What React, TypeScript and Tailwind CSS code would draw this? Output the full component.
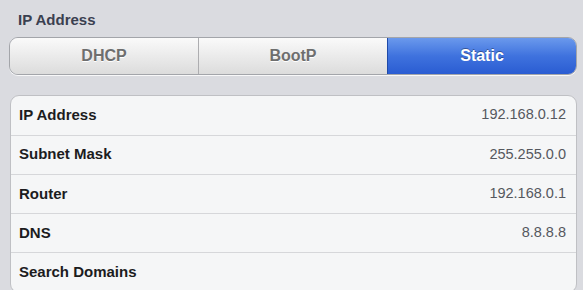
const modes = ["DHCP", "BootP", "Static"]

const rows = [
  { label: "IP Address", value: "192.168.0.12" },
  { label: "Subnet Mask", value: "255.255.0.0" },
  { label: "Router", value: "192.168.0.1" },
  { label: "DNS", value: "8.8.8.8" },
  { label: "Search Domains", value: "" }
]

export default function App() {
  const selected = "Static"

  return (
    <div
      className="w-[583px] h-[290px] overflow-hidden bg-[#dadbe0] pt-[11px] pl-[9px] pr-[6px]"
      style={{ fontFamily: '"Liberation Sans", Arial, sans-serif' }}
    >
      {/* Section title */}
      <h3 className="pl-[9px] text-[15px] leading-[17px] font-bold text-[#3a4050]">IP Address</h3>

      {/* Segmented control */}
      <div className="mt-[9px] flex h-[38px] rounded-[9px] border border-[#a3a5aa] overflow-hidden shadow-[0_1px_0_rgba(255,255,255,0.8)]">
        {modes.map((mode, i) => {
          const active = mode === selected
          return (
            <div
              key={mode}
              className={
                active
                  ? "flex-1 flex items-center justify-center bg-gradient-to-b from-[#6b99ec] via-[#3f72de] to-[#2a5cd2] border-l border-[#1f4aa8] text-white text-[16px] font-bold [text-shadow:0_-1px_0_rgba(0,0,0,0.35)]"
                  : i === 0
                    ? "flex-1 flex items-center justify-center bg-gradient-to-b from-[#fafafa] to-[#dcdcdc] text-[#6e6e6e] text-[16px] font-bold [text-shadow:0_1px_0_#fff]"
                    : "flex-1 flex items-center justify-center bg-gradient-to-b from-[#fafafa] to-[#dcdcdc] border-l border-[#adadb0] text-[#6e6e6e] text-[16px] font-bold [text-shadow:0_1px_0_#fff]"
              }
            >
              {mode}
            </div>
          )
        })}
      </div>

      {/* Address table */}
      <div className="mt-[20px] ml-[1px] rounded-[9px] border border-[#bfc0c4] bg-[#f5f6f7] overflow-hidden">
        {rows.map((row, i) => (
          <div
            key={row.label}
            className={
              i === 0
                ? "flex h-[38.5px] items-center justify-between pl-[8px] pr-[10px]"
                : "flex h-[39.3px] items-center justify-between pl-[8px] pr-[10px] border-t border-[#d6d7da]"
            }
          >
            <span className="text-[15px] font-bold text-[#1c1c1e]">{row.label}</span>
            <span className="text-[14.5px] text-[#55585e]">{row.value}</span>
          </div>
        ))}
      </div>
    </div>
  )
}
